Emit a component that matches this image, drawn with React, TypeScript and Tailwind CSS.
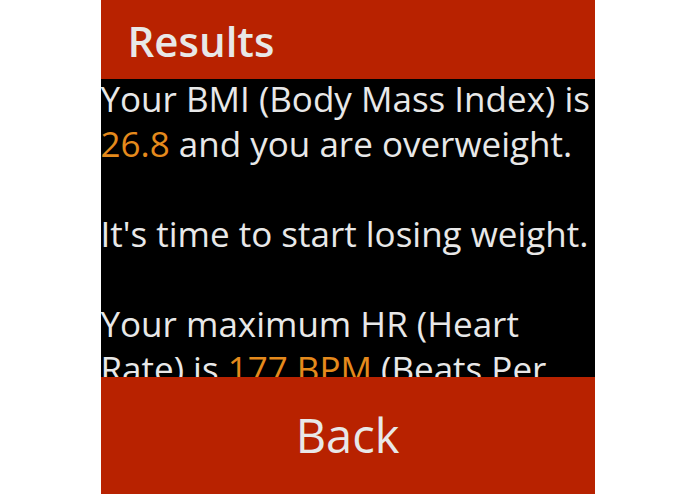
const App = () => {
  return (
    <div className="flex h-[494px] w-full justify-center bg-white">
      <div
        className="flex h-full w-[494px] flex-col bg-black text-[#e8e8e8]"
        style={{ fontFamily: '"Open Sans", "Noto Sans", sans-serif' }}
      >
        <div className="flex h-[79px] shrink-0 items-center bg-[#b82200] pl-[27px] pt-[2px]">
          <h1 className="text-[42px] font-semibold leading-none">Results</h1>
        </div>
        <div className="flex-1 overflow-hidden">
          <div className="-mt-[3px] text-[35px] leading-[45px]">
            <p>
              Your BMI (Body Mass Index) is <span className="text-[#e58a1c]">26.8</span> and you
              are overweight.
            </p>
            <p className="mt-[45px]">It's time to start losing weight.</p>
            <p className="mt-[45px]">
              Your maximum HR (Heart Rate) is <span className="text-[#e58a1c]">177 BPM</span> (Beats
              Per Minute).
            </p>
          </div>
        </div>
        <button className="flex h-[117px] shrink-0 items-center justify-center bg-[#b82200] text-[47px] leading-none">
          Back
        </button>
      </div>
    </div>
  )
}

export default App
